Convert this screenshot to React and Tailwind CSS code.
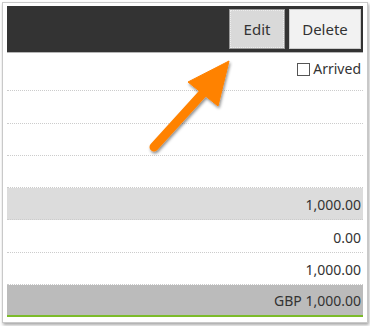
import React from "react";

const rows = [
  { text: "", bg: "", h: "h-[33px]" },
  { text: "", bg: "", h: "h-[32px]" },
  { text: "", bg: "", h: "h-[32px]" },
  { text: "1,000.00", bg: "bg-[#dcdcdc]", h: "h-[32px]" },
  { text: "0.00", bg: "", h: "h-[33px]" },
  { text: "1,000.00", bg: "", h: "h-[32px]" },
];

export default function App() {
  return (
    <div className="relative w-[370px] h-[326px] bg-white" style={{ fontFamily: "'Noto Sans', sans-serif" }}>
      <div className="absolute left-[2px] top-[2px] w-[366px] h-[321px] border border-[#c9c9c9] bg-white pt-[3px] px-[4px] shadow-[1px_2px_3px_rgba(0,0,0,0.35)]">
        <div className="flex items-center justify-end gap-[4px] h-[47px] bg-[#333333] border-b border-[#b5b5b5] pr-[2px]">
          <button className="h-[40px] w-[56px] bg-[#d9d9d9] border border-[#999] outline-1 outline-dotted outline-[#eee] -outline-offset-2 text-[15px] text-[#333]">
            Edit
          </button>
          <button className="h-[40px] w-[72px] bg-[#f2f2f2] border border-[#ccc] text-[15px] text-[#333]">
            Delete
          </button>
        </div>
        <div className="h-[38px] flex justify-end items-start pt-[6px] pr-[2px] border-b border-dotted border-[#ccc] text-[14px] text-[#333]">
          <label className="flex items-center gap-[3px] leading-[20px]">
            <span className="inline-block w-[13px] h-[13px] border border-[#555] bg-white" />
            Arrived
          </label>
        </div>
        {rows.map((r, i) => (
          <div
            key={i}
            className={`${r.h} flex items-center justify-end pr-[2px] pt-[2px] border-b border-dotted border-[#ccc] text-[14px] text-[#333] ${r.bg}`}
          >
            {r.text}
          </div>
        ))}
        <div className="h-[32px] flex items-center justify-end pr-[2px] pt-[1px] bg-[#bbbbbb] border-b-2 border-[#7cbb2a] text-[14px] text-[#333]">
          GBP 1,000.00
        </div>
      </div>
      <svg className="absolute left-0 top-0" width="370" height="326" viewBox="0 0 370 326">
        <defs>
          <filter id="sh" x="-20%" y="-20%" width="140%" height="140%">
            <feDropShadow dx="1" dy="2" stdDeviation="1.5" floodColor="#000" floodOpacity="0.45" />
          </filter>
        </defs>
        <g filter="url(#sh)" fill="#ff8200" stroke="#ff8200">
          <line x1="154" y1="147" x2="204" y2="92" strokeWidth="9" strokeLinecap="round" />
          <polygon points="229,61 188,82 218,106" strokeWidth="1" strokeLinejoin="round" />
        </g>
      </svg>
    </div>
  );
}
